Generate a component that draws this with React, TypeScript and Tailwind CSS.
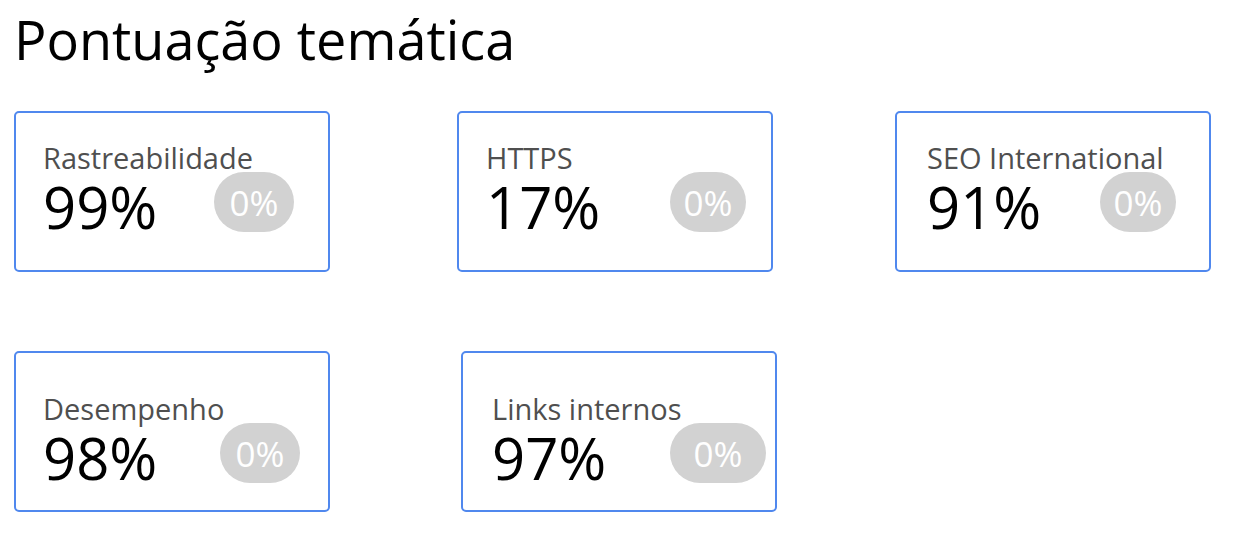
const font = { fontFamily: '"Open Sans", "Noto Sans", sans-serif' };

type Score = {
  label: string;
  value: string;
  pl: string;
  pt: string;
  numW: string;
  pillW: string;
  ml: string;
};

const rows: Score[][] = [
  [
    { label: 'Rastreabilidade', value: '99%', pl: 'pl-[27px]', pt: 'pt-[30px]', numW: 'w-[171px]', pillW: 'w-[80px]', ml: 'ml-0' },
    { label: 'HTTPS', value: '17%', pl: 'pl-[27px]', pt: 'pt-[30px]', numW: 'w-[184px]', pillW: 'w-[76px]', ml: 'ml-[127px]' },
    { label: 'SEO International', value: '91%', pl: 'pl-[30px]', pt: 'pt-[30px]', numW: 'w-[173px]', pillW: 'w-[76px]', ml: 'ml-[122px]' },
  ],
  [
    { label: 'Desempenho', value: '98%', pl: 'pl-[27px]', pt: 'pt-[41px]', numW: 'w-[177px]', pillW: 'w-[80px]', ml: 'ml-0' },
    { label: 'Links internos', value: '97%', pl: 'pl-[29px]', pt: 'pt-[41px]', numW: 'w-[178px]', pillW: 'w-[96px]', ml: 'ml-[131px]' },
  ],
];

function ScoreCard({ s }: { s: Score }) {
  return (
    <div className={`w-[316px] h-[161px] shrink-0 rounded-[5px] border-2 border-[#5088ee] bg-white ${s.pl} ${s.pt} ${s.ml}`}>
      <div className="text-[29px] leading-none text-[#4f4f4f] whitespace-nowrap">{s.label}</div>
      <div className="mt-[6px] flex items-start">
        <div className={`${s.numW} shrink-0 text-[58px] leading-none text-black`}>{s.value}</div>
        <div className={`${s.pillW} -mt-[6px] h-[60px] shrink-0 rounded-full bg-[#d2d2d2] flex items-center justify-center text-[35px] leading-none text-white`}>
          0%
        </div>
      </div>
    </div>
  );
}

export default function App() {
  return (
    <div className="w-[1246px] h-[558px] bg-white pl-[14px] pt-[12px] overflow-hidden" style={font}>
      <h1 className="text-[54px] leading-none text-black font-normal">Pontuação temática</h1>
      <div className="mt-[45px] flex">
        {rows[0].map((s) => (
          <ScoreCard key={s.label} s={s} />
        ))}
      </div>
      <div className="mt-[79px] flex">
        {rows[1].map((s) => (
          <ScoreCard key={s.label} s={s} />
        ))}
      </div>
    </div>
  );
}
